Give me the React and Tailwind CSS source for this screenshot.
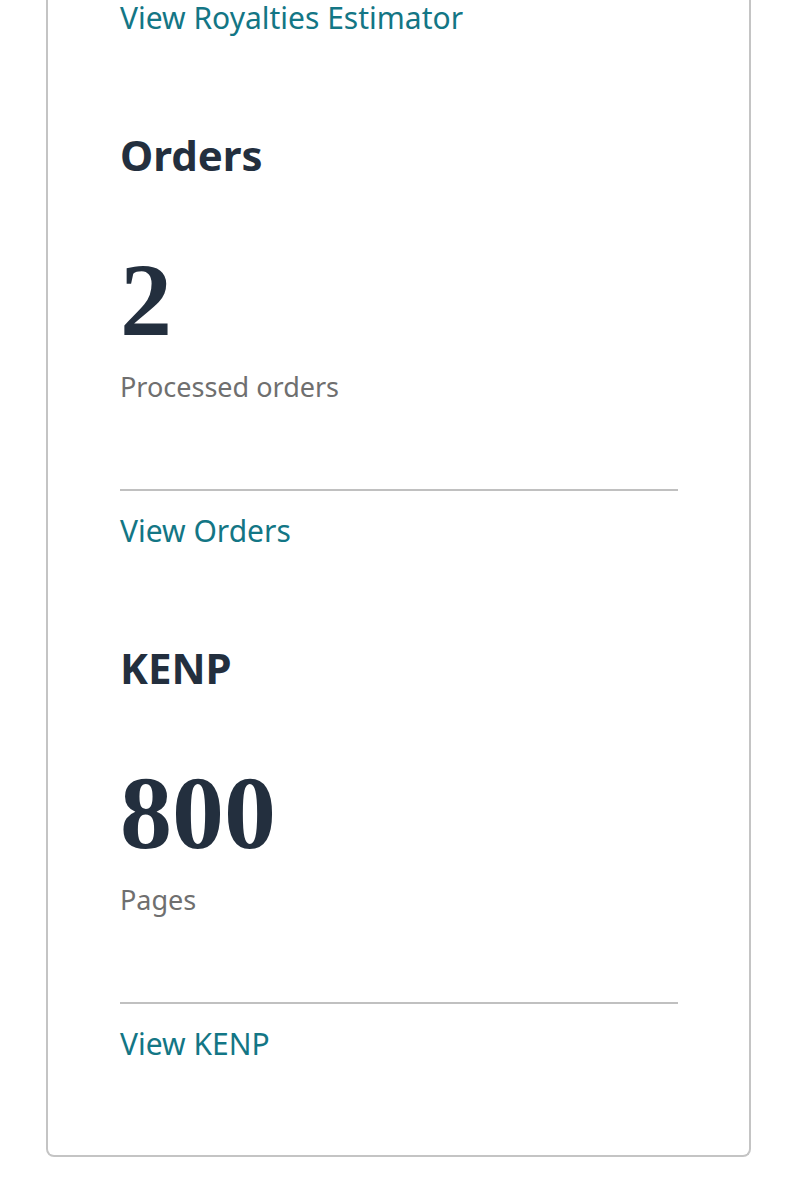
const sans = { fontFamily: '"Noto Sans", "Open Sans", sans-serif' };

const sections = [
  { title: 'Orders', value: '2', label: 'Processed orders', link: 'View Orders' },
  { title: 'KENP', value: '800', label: 'Pages', link: 'View KENP' },
];

function Metric({ title, value, label, link }) {
  return (
    <div className="flex flex-col">
      <h2 className="mt-[94px] text-[42px] leading-[50px] font-bold text-[#232f3e]">{title}</h2>
      <div className="mt-[68px] text-[104px] leading-[104px] font-bold text-[#232f3e] font-['Liberation_Serif',serif]">
        {value}
      </div>
      <p className="mt-[17px] text-[27px] leading-[36px] text-[#6f6f6f]">{label}</p>
      <hr className="mt-[84px] border-0 h-[2px] bg-[#c0c0c0]" />
      <a href="#" className="mt-[22px] text-[30px] leading-[36px] text-[#137685]">
        {link}
      </a>
    </div>
  );
}

export default function App() {
  return (
    <div className="min-h-[1200px] bg-white" style={sans}>
      <div className="ml-[46px] mr-[47px] border-x-2 border-b-2 border-[#c4c4c4] rounded-b-lg pl-[72px] pr-[71px] pb-[93px]">
        <a href="#" className="block text-[30px] leading-[36px] text-[#137685]">
          View Royalties Estimator
        </a>
        {sections.map((s) => (
          <Metric key={s.title} {...s} />
        ))}
      </div>
    </div>
  );
}
